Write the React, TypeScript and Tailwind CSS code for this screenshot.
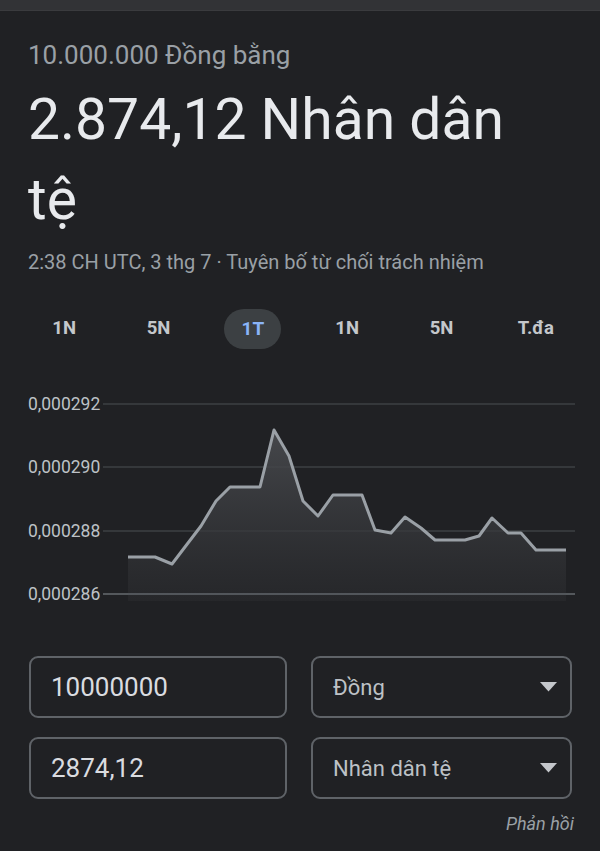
import React from "react";

const points: [number, number][] = [
  [128, 556], [155, 556], [172, 563], [188, 542], [201, 525], [216, 500],
  [230, 486], [260, 486], [274, 429], [289, 455], [303, 500], [318, 515],
  [333, 494], [362, 494], [375, 529], [391, 532], [405, 516], [421, 527],
  [435, 539], [465, 539], [479, 535], [492, 517], [508, 532], [521, 532],
  [536, 549], [566, 549],
];

const gridRows = [
  { label: "0,000292", y: 403 },
  { label: "0,000290", y: 466 },
  { label: "0,000288", y: 530 },
  { label: "0,000286", y: 593 },
];

const tabs = ["1N", "5N", "1T", "1N", "5N", "T.đa"];

// chart svg starts at page y=380
const TOP = 380;

function Chart() {
  const line = points.map(([x, y]) => `${x},${y - TOP}`).join(" ");
  const area = `M${points[0][0]},220 L${line.replace(/ /g, " L")} L${points[points.length - 1][0]},220 Z`;
  return (
    <svg width="600" height="240" viewBox="0 0 600 240" className="block">
      <defs>
        <linearGradient id="fill" x1="0" y1="0" x2="0" y2="1">
          <stop offset="0%" stopColor="#4a4c50" stopOpacity="0.9" />
          <stop offset="100%" stopColor="#2a2b2e" stopOpacity="0.6" />
        </linearGradient>
      </defs>
      {gridRows.map((r) => (
        <g key={r.label}>
          <line x1="103" x2="575" y1={r.y - TOP} y2={r.y - TOP} stroke="#3c4043" strokeWidth="1.5" />
          <text
            x="28"
            y={r.y - TOP + 6}
            fill="#bdc1c6"
            fontSize="17.5"
            fontFamily="Roboto, sans-serif"
          >
            {r.label}
          </text>
        </g>
      ))}
      <path d={area} fill="url(#fill)" />
      <line x1="103" x2="575" y1={593 - TOP} y2={593 - TOP} stroke="#5f6368" strokeWidth="1.5" />
      <polyline points={line} fill="none" stroke="#9aa0a6" strokeWidth="3" strokeLinejoin="round" />
    </svg>
  );
}

function Field({ value, select }: { value: string; select?: boolean }) {
  return (
    <div className="flex h-[62px] items-center justify-between rounded-[9px] border-2 border-[#5f6368] pl-[20px] pr-[13px]">
      <span className={select ? "text-[22px] text-[#bdc1c6]" : "text-[26px] text-[#dadce0]"}>{value}</span>
      {select && (
        <svg width="17" height="10" viewBox="0 0 17 10">
          <path d="M0 0 H17 L8.5 9.5 Z" fill="#c4c7cb" />
        </svg>
      )}
    </div>
  );
}

export default function App() {
  return (
    <div className="min-h-[851px] w-[600px] bg-[#202124] font-['Roboto',sans-serif]">
      <div className="h-[11px] border-b border-[#3a3b3e] bg-[#323336]" />

      <div className="px-[28px] pt-[28px]">
        <div className="text-[26px] leading-[32px] text-[#9aa0a6]">10.000.000 Đồng bằng</div>
        <h1 className="mt-[9px] max-w-[520px] text-[57px] leading-[80px] text-[#e8eaed]">
          2.874,12 Nhân dân tệ
        </h1>
        <div className="mt-[10px] text-[20px] leading-[24px] text-[#9aa0a6]">
          2:38 CH UTC, 3 thg 7 · Tuyên bố từ chối trách nhiệm
        </div>
      </div>

      <div className="mt-[35px] grid grid-cols-6 px-[17px]">
        {tabs.map((t, i) => (
          <div key={i} className="flex justify-center">
            <div
              className={
                i === 2
                  ? "flex h-[40px] w-[57px] items-center justify-center rounded-full bg-[#3c4043] text-[19px] font-bold text-[#8ab4f8]"
                  : "flex h-[40px] w-[57px] items-center justify-center text-[18.5px] font-bold text-[#c4c7cb]"
              }
            >
              {t}
            </div>
          </div>
        ))}
      </div>

      <div className="mt-[32px]">
        <Chart />
      </div>

      <div className="mt-[35px] grid grid-cols-[258px_261px] gap-x-[24px] gap-y-[19px] pl-[29px]">
        <Field value="10000000" />
        <Field value="Đồng" select />
        <Field value="2874,12" />
        <Field value="Nhân dân tệ" select />
      </div>

      <div className="mt-[11px] pr-[26px] text-right text-[18px] italic text-[#9aa0a6]">Phản hồi</div>
    </div>
  );
}
